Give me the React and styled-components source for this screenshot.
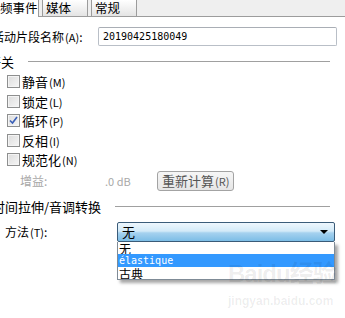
import React from "react";
import styled, { createGlobalStyle } from "styled-components";

const Global = createGlobalStyle`
  html, body {
    margin: 0;
    background: #ffffff;
  }
  body {
    font-family: "Noto Sans CJK SC", "DejaVu Sans", sans-serif;
    font-size: 12px;
    color: #000;
    overflow: hidden;
  }
`;

const Page = styled.div`
  position: relative;
  width: 345px;
  height: 318px;
  overflow: hidden;
`;

const TabBar = styled.div`
  display: flex;
  align-items: flex-end;
  gap: 3px;
  height: 16px;
  background: #efefef;
  border-bottom: 1px solid #9c9c9c;
`;

const Tab = styled.div`
  height: ${(p) => (p.$active ? "17px" : "16px")};
  margin-bottom: ${(p) => (p.$active ? "-1px" : "0")};
  width: ${(p) => p.$w}px;
  box-sizing: border-box;
  padding-left: ${(p) => (p.$active ? "0" : "3px")};
  padding-bottom: ${(p) => (p.$active ? "1px" : "0")};
  display: flex;
  align-items: center;
  white-space: nowrap;
  font-size: 12.5px;
  line-height: 14px;
  background: ${(p) =>
    p.$active ? "#ffffff" : "linear-gradient(#ffffff, #e4e4e4)"};
  border-right: 1px solid #9c9c9c;
  border-left: ${(p) => (p.$active ? "none" : "1px solid #9c9c9c")};
`;

const Panel = styled.div`
  display: flex;
  flex-direction: column;
  margin-left: -8px;
  padding-top: 9px;
`;

const Row = styled.div`
  display: flex;
  align-items: center;
  height: ${(p) => p.$h || 20}px;
  padding-left: ${(p) => p.$indent || 0}px;
`;

const Label = styled.span`
  white-space: nowrap;
  color: ${(p) => (p.$disabled ? "#a8a8a8" : "#000")};
  width: ${(p) => (p.$w ? p.$w + "px" : "auto")};
  font-size: ${(p) => (p.$small ? "11px" : "inherit")};
  flex: none;
`;

const Key = styled.span`
  font-size: 11px;
  margin-left: 1px;
`;

const TextInput = styled.div`
  width: 239px;
  height: 19px;
  box-sizing: border-box;
  border: 1px solid #b9bfc7;
  border-top-color: #a9aeb5;
  border-radius: 2px;
  padding-left: 4px;
  line-height: 17px;
  font-family: "DejaVu Sans Mono", monospace;
  font-size: 10px;
  margin-left: 10px;
`;

const Section = styled.div`
  display: flex;
  align-items: center;
  gap: 14px;
  height: 18px;
  margin-left: ${(p) => p.$shift || 0}px;
  font-size: 13px;
  white-space: nowrap;

  &::after {
    content: "";
    flex: 1;
    height: 1px;
    background: #a0a0a0;
    margin-right: 15px;
  }
`;

const Box = styled.span`
  width: 13px;
  height: 13px;
  box-sizing: border-box;
  border: 1px solid #8e8f8f;
  background: linear-gradient(135deg, #dcdcdc, #f6f6f6);
  box-shadow: inset 0 0 0 1px #f4f4f4;
  display: flex;
  align-items: center;
  justify-content: center;
  margin-right: 2px;
  flex: none;
`;

const CheckRow = styled(Row)`
  height: 19.5px;
  padding-left: 15px;
  font-size: 13px;
`;

const Btn = styled.div`
  height: 20px;
  box-sizing: border-box;
  padding: 0 4px;
  border: 1px solid #a3a3a3;
  border-radius: 3px;
  background: linear-gradient(#f6f6f6, #e6e6e6);
  color: #555;
  line-height: 18px;
  font-size: 13px;
  white-space: nowrap;
`;

const SelectWrap = styled.div`
  position: relative;
  margin-left: 64px;
  width: 218px;
`;

const Select = styled.div`
  height: 20px;
  box-sizing: border-box;
  border: 1px solid #3b5c79;
  border-radius: 2px;
  background: linear-gradient(#eef7fd 0%, #d3eaf8 45%, #a6d2ef 55%, #7cbde6 100%);
  display: flex;
  align-items: center;
  justify-content: space-between;
  padding: 0 6px 0 4px;
  font-size: 13px;
`;

const Arrow = styled.span`
  width: 0;
  height: 0;
  border-left: 4px solid transparent;
  border-right: 4px solid transparent;
  border-top: 4px solid #000;
`;

const List = styled.div`
  position: absolute;
  top: 20px;
  left: 0;
  width: 218px;
  box-sizing: border-box;
  background: #fff;
  border: 1px solid #7f8b96;
  border-top: none;
  box-shadow: 3px 3px 3px rgba(0, 0, 0, 0.35);
  z-index: 2;
`;

const Option = styled.div`
  height: 12.5px;
  line-height: 13px;
  padding-left: 1px;
  overflow: hidden;
  background: ${(p) => (p.$sel ? "#3399ff" : "transparent")};
  color: ${(p) => (p.$sel ? "#fff" : "#000")};
  font-family: ${(p) =>
    p.$mono ? '"DejaVu Sans Mono", monospace' : "inherit"};
  font-size: ${(p) => (p.$mono ? "10px" : "12px")};
`;

const Watermark = styled.div`
  position: absolute;
  left: 228px;
  top: 262px;
  color: rgba(0, 0, 0, 0.08);
  font-family: "Liberation Sans", sans-serif;
  font-weight: bold;
  line-height: 1;
  pointer-events: none;
  z-index: 3;
`;

const MarkBig = styled.div`
  font-size: 24px;
  letter-spacing: -1px;
  font-family: "Liberation Sans", "Noto Sans CJK SC", sans-serif;
`;

const MarkSmall = styled.div`
  font-size: 12px;
  margin-top: 9px;
`;

const Check = () => (
  <svg width="9" height="9" viewBox="0 0 9 9">
    <path d="M1 4.5 L3.5 7 L8 1" fill="none" stroke="#3a5fb8" strokeWidth="1.6" />
  </svg>
);

const options = [
  { label: "静音", key: "M" },
  { label: "锁定", key: "L" },
  { label: "循环", key: "P", checked: true },
  { label: "反相", key: "I" },
  { label: "规范化", key: "N" },
];

export default function App() {
  return (
    <Page>
      <Global />
      <TabBar>
        <Tab $active $w={39}>频事件</Tab>
        <Tab $w={46}>媒体</Tab>
        <Tab $w={46}>常规</Tab>
      </TabBar>
      <Panel>
        <Row $h={20}>
          <Label $w={96}>
            活动片段名称<Key>(A)</Key>:
          </Label>
          <TextInput>20190425180049</TextInput>
        </Row>
        <Row $h={6} />
        <Section $shift={-4}>开关</Section>
        <Row $h={2} />
        {options.map((o) => (
          <CheckRow key={o.key}>
            <Box>{o.checked && <Check />}</Box>
            <Label>
              {o.label}
              <Key>({o.key})</Key>
            </Label>
          </CheckRow>
        ))}
        <Row $h={22} $indent={28}>
          <Label $disabled $w={85}>增益:</Label>
          <Label $disabled $small $w={52}>
            .0 dB
          </Label>
          <Btn>
            重新计算<Key>(R)</Key>
          </Btn>
        </Row>
        <Row $h={6} />
        <Section>时间拉伸/音调转换</Section>
        <Row $h={6} />
        <Row $h={20} $indent={13}>
          <Label $w={48}>
            方法<Key>(T)</Key>:
          </Label>
          <SelectWrap>
            <Select>
              <span>无</span>
              <Arrow />
            </Select>
            <List>
              <Option>无</Option>
              <Option $sel $mono>élastique</Option>
              <Option>古典</Option>
            </List>
          </SelectWrap>
        </Row>
      </Panel>
      <Watermark>
        <MarkBig>Baidu经验</MarkBig>
        <MarkSmall>jingyan.baidu.com</MarkSmall>
      </Watermark>
    </Page>
  );
}
